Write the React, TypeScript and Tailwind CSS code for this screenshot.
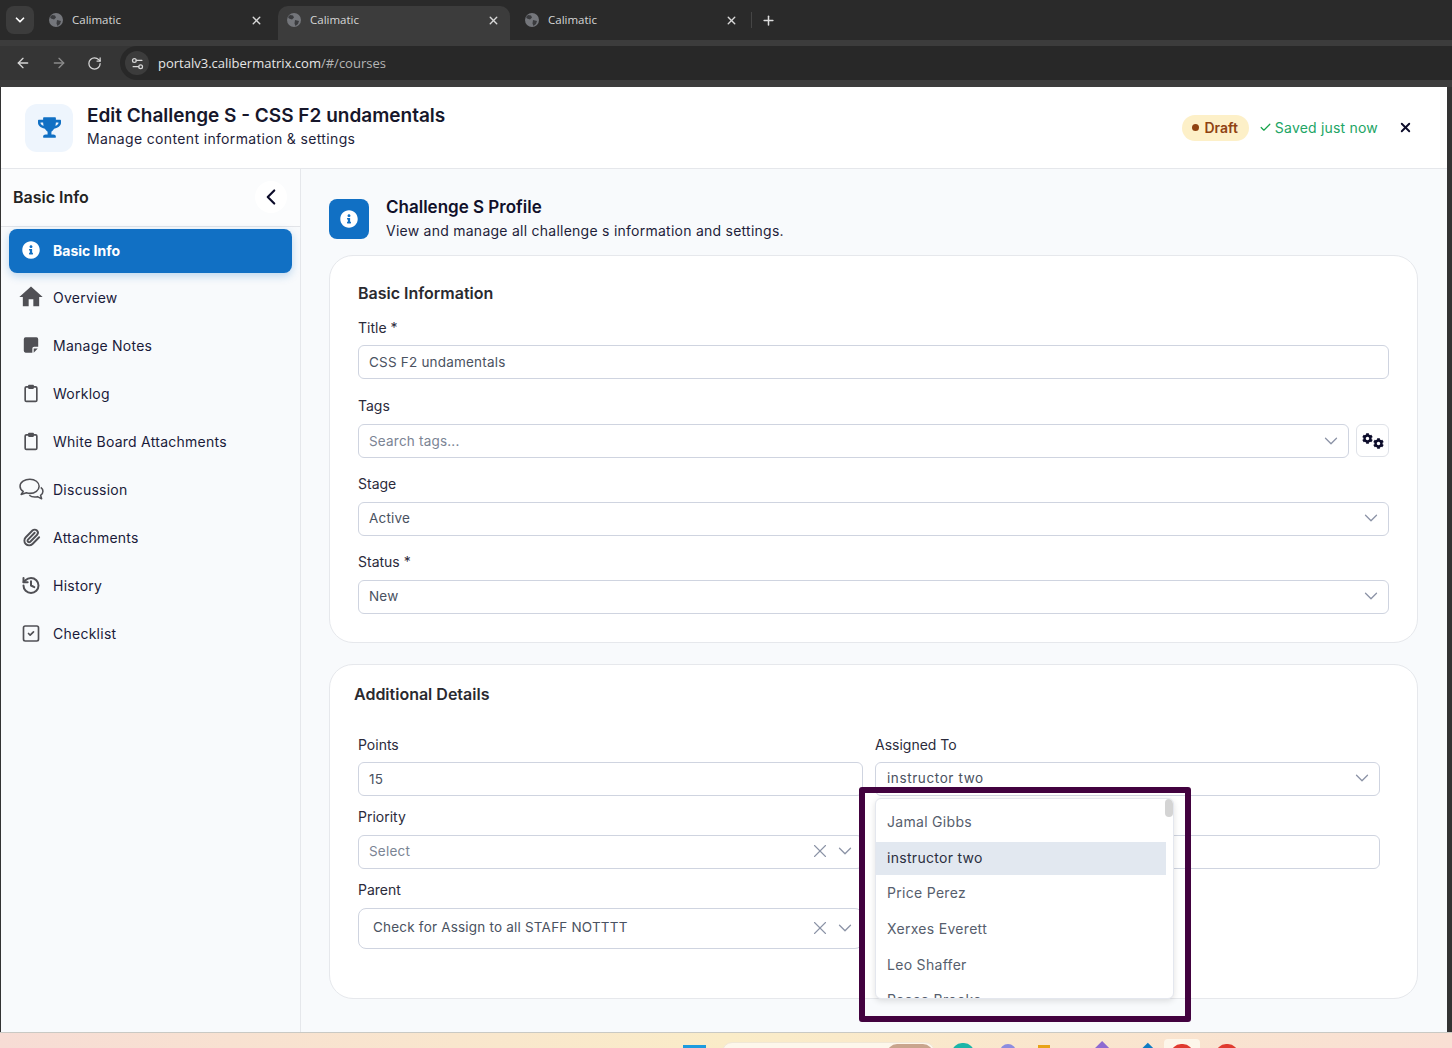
import {
  ArrowLeft,
  ArrowRight,
  Check,
  ChevronDown,
  ChevronLeft,
  History,
  Paperclip,
  Plus,
  RotateCw,
  Settings2,
  SquareCheck,
  X,
} from "lucide-react";
import { FaCog, FaInfoCircle, FaTrophy } from "react-icons/fa";
import { MdHome } from "react-icons/md";
import type { ReactNode } from "react";

function Globe() {
  return (
    <svg width="14" height="14" viewBox="0 0 14 14" className="shrink-0">
      <circle cx="7" cy="7" r="7" fill="#74767b" />
      <path d="M3 2l3 .5 1 2-2 2-3-1-1-1.500zM8 7l4 1-1 3-2.500 2-1-2.500z" fill="#3a3b3e" />
    </svg>
  );
}

function Tab({ active, className }: { active?: boolean; className: string }) {
  return (
    <div
      className={`flex items-center h-[34px] mt-[6px] pb-[6px] rounded-t-[10px] ${className} ${
        active ? "bg-[#3c3c3c]" : ""
      }`}
    >
      <Globe />
      <span className="ml-[9px] text-[11.5px] text-[#d6d6d6] flex-1">Calimatic</span>
      <X size={13} strokeWidth={2.6} className="text-[#d8d8d8]" />
    </div>
  );
}

function Browser() {
  return (
    <div className="shrink-0 font-['Open_Sans',sans-serif]">
      <div className="h-10 bg-[#2a2a2a] flex items-start pl-[6px]">
        <div className="mt-[6px] w-7 h-7 rounded-lg bg-[#3c3c3c] flex items-center justify-center">
          <ChevronDown size={14} strokeWidth={3} className="text-white" />
        </div>
        <div className="flex ml-[4px]">
          <Tab className="w-[240px] pl-[11px] pr-[15px]" />
          <Tab active className="w-[232px] pl-[9px] pr-[10px]" />
          <Tab className="w-[236px] pl-[15px] pr-[8px]" />
        </div>
        <div className="mt-[12px] ml-[5px] w-px h-[16px] bg-[#454545]" />
        <Plus size={15} strokeWidth={2.4} className="text-[#dddddd] mt-[12.500px] ml-[9px]" />
      </div>
      <div className="h-[40px] bg-[#3c3c3c] flex items-end">
        <div className="flex items-center h-[34px] self-end pl-[15px] gap-[20px] text-[#d6d6d6] bg-[#353535]">
          <ArrowLeft size={16} strokeWidth={2} />
          <ArrowRight size={16} strokeWidth={2} className="text-[#8b8b8b]" />
          <RotateCw size={15} strokeWidth={2} />
        </div>
        <div className="pl-[18px] flex-1 h-[34px] bg-[#353535]">
          <div className="h-[34px] bg-[#282828] rounded-l-[17px] flex items-center pl-[5px]">
            <div className="w-[24px] h-[24px] rounded-full bg-[#3c3c3c] flex items-center justify-center">
              <Settings2 size={15} className="text-[#d6d6d6]" />
            </div>
            <span className="ml-[9px] pt-px text-[13px] text-[#e6e6e6]">
              portalv3.calibermatrix.com<span className="text-[#b5b5b5]">/#/courses</span>
            </span>
          </div>
        </div>
      </div>
      <div className="h-[7px] bg-[#3c3c3c]" />
    </div>
  );
}

function NoteIcon() {
  return (
    <svg width="18" height="18" viewBox="0 0 20 20" fill="currentColor">
      <path d="M2 3.500a2 2 0 012-2h12a2 2 0 012 2v8.500h-4.500a2 2 0 00-2 2v4.500H4a2 2 0 01-2-2z" />
      <path d="M13 14h4.500l-4.500 4.500z" />
    </svg>
  );
}

function ClipboardIcon() {
  return (
    <svg width="23" height="23" viewBox="0 0 24 24" fill="none">
      <rect x="5" y="4" width="14" height="17.500" rx="1.500" stroke="currentColor" strokeWidth="2" />
      <rect x="8.500" y="1.500" width="7" height="5" rx="1" fill="currentColor" />
    </svg>
  );
}

function ChatIcon() {
  return (
    <svg width="27" height="24" viewBox="0 0 24 22" fill="none" stroke="currentColor" strokeWidth="1.400" strokeLinejoin="round" className="shrink-0">
      <path d="M10.500 2C5.800 2 1.500 4.800 1.500 8.500c0 2 1.100 3.600 2.900 4.800L2.500 16l4.800-1.500c1 .300 2.100.500 3.200.500 4.700 0 8.500-2.900 8.500-6.500S15.200 2 10.500 2z" />
      <path d="M20.500 9.500c1.300 1 2 2.200 2 3.600 0 1.500-.800 2.800-2.200 3.700l1 3.200-3.800-2c-.800.200-1.600.300-2.500.300-2 0-3.800-.600-5-1.600" />
    </svg>
  );
}

function NavItem({ icon, label, active }: { icon: ReactNode; label: string; active?: boolean }) {
  if (active) {
    return (
      <div className="mx-[8px] mt-[2px] mb-[1px] h-[44px] pb-[2px] rounded-lg bg-[#1170c4] shadow-[0_3px_8px_rgba(17,112,196,0.25)] flex items-center pl-[12px]">
        <span className="w-5 flex justify-center">{icon}</span>
        <span className="ml-[12px] text-[14px] font-bold text-white">{label}</span>
      </div>
    );
  }
  return (
    <div className="h-[48px] pb-[2px] flex items-center pl-[20px]">
      <span className="w-5 flex justify-center text-[#505055]">{icon}</span>
      <span className="ml-[12px] text-[14px] tracking-[0.25px] text-[#1a1a3a]">{label}</span>
    </div>
  );
}

function Sidebar() {
  return (
    <aside className="w-[300px] shrink-0 border-r border-[#e5e7eb] bg-[#f8fafc]">
      <div className="h-[58px] pb-[2px] flex items-center justify-between pl-[12px] pr-[13px] border-b border-[#e2e4e8] bg-[#fbfcfd]">
        <span className="text-[16px] font-semibold text-[#232323]">Basic Info</span>
        <span className="w-8 h-8 rounded-full bg-white flex items-center justify-center">
          <ChevronLeft size={26} strokeWidth={2} className="text-[#0c0c2a]" />
        </span>
      </div>
      <NavItem active label="Basic Info" icon={<FaInfoCircle size={18} className="text-white" />} />
      <NavItem label="Overview" icon={<MdHome size={28} className="shrink-0" />} />
      <NavItem label="Manage Notes" icon={<NoteIcon />} />
      <NavItem label="Worklog" icon={<ClipboardIcon />} />
      <NavItem label="White Board Attachments" icon={<ClipboardIcon />} />
      <NavItem label="Discussion" icon={<ChatIcon />} />
      <NavItem label="Attachments" icon={<Paperclip size={19} strokeWidth={2.4} />} />
      <NavItem label="History" icon={<History size={21} strokeWidth={2.4} />} />
      <NavItem label="Checklist" icon={<SquareCheck size={21} strokeWidth={2} />} />
    </aside>
  );
}

function Label({ children }: { children: ReactNode }) {
  return <div className="text-[14px] leading-[18px] text-[#2b2b3b]">{children}</div>;
}

function Field({
  value,
  muted,
  chevron,
  clear,
  className = "",
}: {
  value: string;
  muted?: boolean;
  chevron?: boolean;
  clear?: boolean;
  className?: string;
}) {
  return (
    <div
      className={`flex items-center h-[34px] rounded-md border border-[#cfd4e0] bg-white pl-[10px] pr-[6px] ${className}`}
    >
      <span className={`flex-1 text-[13.5px] tracking-[0.2px] ${muted ? "text-[#7b8494]" : "text-[#4a5261]"}`}>{value}</span>
      {clear && <X size={22} strokeWidth={1.2} className="text-[#8b93a6] mr-[3px]" />}
      {chevron && <ChevronDown size={22} strokeWidth={1.4} className="text-[#8b93a6]" />}
    </div>
  );
}

function Dropdown() {
  const names = ["Jamal Gibbs", "instructor two", "Price Perez", "Xerxes Everett", "Leo Shaffer", "Reese Brooks"];
  return (
    <div className="absolute left-[859px] top-[787px] w-[332px] h-[235px] border-[6px] border-[#42023f] rounded-[3px] pt-[5px] pl-[10px]">
      <div className="relative w-[299px] h-[201px] overflow-hidden bg-white rounded-md border border-[#e4e7ee] shadow-[0_2px_6px_rgba(0,0,0,0.12)] pt-[7px]">
        <div className="absolute right-0 top-0 w-[8px] h-[18px] bg-[#d4d4d4] rounded-full" />
        {names.map((n) => (
          <div
            key={n}
            className={`w-[290px] h-[33px] mb-[2.700px] pl-[11px] pb-[2px] flex items-center text-[14px] tracking-[0.3px] ${
              n === "instructor two" ? "bg-[#e2e8f0] text-[#2b2f3f]" : "text-[#565e6d]"
            }`}
          >
            {n}
          </div>
        ))}
      </div>
    </div>
  );
}

function Content() {
  return (
    <main className="flex-1 bg-[#f8fafc] pl-[28px] pr-[29px] pt-[30px]">
      <div className="flex items-center h-10">
        <div className="w-10 h-10 rounded-lg bg-[#1170c4] flex items-center justify-center">
          <FaInfoCircle size={18} className="text-white" />
        </div>
        <div className="ml-[17px]">
          <div className="text-[17px] leading-[22px] font-semibold text-[#10102a]">Challenge S Profile</div>
          <div className="text-[14px] leading-[22px] mt-[2px] tracking-[0.25px] text-[#1e1e3a]">
            View and manage all challenge s information and settings.
          </div>
        </div>
      </div>

      <section className="mt-[16px] h-[388px] rounded-[24px] border border-[#e6e8ec] bg-white pl-[28px] pr-[28px] pt-[27px]">
        <div className="text-[16px] leading-[20px] font-semibold text-[#2a2a2f]">Basic Information</div>
        <div className="mt-[16px]">
          <Label>Title *</Label>
          <Field className="mt-[8px]" value="CSS F2 undamentals" />
        </div>
        <div className="mt-[18px]">
          <Label>Tags</Label>
          <div className="mt-[9px] flex gap-[7px]">
            <Field className="flex-1" muted chevron value="Search tags..." />
            <div className="w-[33px] h-[33px] rounded-md border border-[#dfe2e8] flex items-center justify-center text-[#0c0c2a]">
              <FaCog size={11} className="-translate-y-[2px]" />
              <FaCog size={11} className="translate-y-[3px]" />
            </div>
          </div>
        </div>
        <div className="mt-[17px]">
          <Label>Stage</Label>
          <Field className="mt-[9px] !pb-[2px]" chevron value="Active" />
        </div>
        <div className="mt-[17px]">
          <Label>Status *</Label>
          <Field className="mt-[9px] !pb-[2px]" chevron value="New" />
        </div>
      </section>

      <section className="mt-[21px] h-[335px] rounded-[24px] border border-[#e6e8ec] bg-white pl-[24px] pt-[19px]">
        <div className="text-[16px] leading-[20px] font-semibold text-[#2a2a2f]">Additional Details</div>
        <div className="mt-[32px] ml-[4px] flex gap-[12px]">
          <div className="w-[505px]">
            <Label>Points</Label>
            <Field className="mt-[8px]" value="15" />
            <div className="mt-[12px]">
              <Label>Priority</Label>
              <Field className="mt-[9px] !pb-[2px]" muted clear chevron value="Select" />
            </div>
            <div className="mt-[12px]">
              <Label>Parent</Label>
              <Field className="mt-[9px] !h-[41px] !pl-[14px] !pb-[2px] !rounded-lg" clear chevron value="Check for Assign to all STAFF NOTTTT" />
            </div>
          </div>
          <div className="w-[505px]">
            <Label>Assigned To</Label>
            <Field className="mt-[8px] !pb-[2px] !pl-[11px] [&>span]:tracking-[0.6px]" chevron value="instructor two" />
            <div className="mt-[39px]">
              <Field value="" />
            </div>
          </div>
        </div>
      </section>
    </main>
  );
}

function Taskbar() {
  return (
    <div className="h-[16px] shrink-0 border-t border-[#c9c9c4] bg-gradient-to-r from-[#f7dcd5] via-[#faecc8] to-[#f9dfd4] overflow-hidden flex items-start pl-[683px]">
      <div className="mt-[12px] w-[23px] h-[10px] shrink-0 bg-[#1d9bdf]" />
      <div className="ml-[16px] mt-[9px] w-[213px] h-[20px] shrink-0 rounded-full bg-[#fdf7ec] border border-[#f0e7d6] flex justify-end">
        <div className="mt-px mr-px w-[46px] h-[20px] rounded-full bg-[#c9a58d]" />
      </div>
      <div className="ml-[17px] mt-[10px] w-[22px] h-[20px] shrink-0 rounded-full bg-[#1cb5a8]" />
      <div className="ml-[26px] mt-[11px] w-[16px] h-[20px] shrink-0 rounded-full bg-[#8c8ce0]" />
      <div className="ml-[22px] mt-[12px] w-[12px] h-[20px] shrink-0 bg-[#e8a317]" />
      <div className="ml-[43px] mt-[10px] w-[14px] h-[20px] shrink-0 bg-[#8d6ad1] rotate-45" />
      <div className="ml-[32px] mt-[11px] w-[12px] h-[20px] shrink-0 bg-[#0f7cc4] rotate-45" />
      <div className="ml-[13px] mt-[6px] w-[36px] h-[20px] shrink-0 rounded bg-[#fdf6ea] flex justify-center">
        <div className="mt-[5px] w-[22px] h-[20px] rounded-full bg-[#e03a2f]" />
      </div>
      <div className="ml-[16px] mt-[11px] w-[22px] h-[20px] shrink-0 rounded-full bg-[#e03a2f]" />
    </div>
  );
}

export default function App() {
  return (
    <div className="relative w-[1452px] h-[1048px] overflow-hidden flex flex-col bg-[#333333] font-['Inter','Noto_Sans',sans-serif]">
      <Browser />
      <div className="flex-1 flex flex-col min-h-0 ml-[1px] mr-[5px] bg-white">
        <header className="h-[82px] shrink-0 flex items-center border-b border-[#e5e7eb] bg-white pl-[24px] pr-[34px]">
          <div className="w-12 h-12 rounded-xl bg-[#eef5fd] flex items-center justify-center">
            <FaTrophy size={23} className="text-[#1170c4]" />
          </div>
          <div className="ml-[14px] flex-1 mb-[4px]">
            <div className="text-[19px] leading-[26px] font-semibold text-[#17172b]">Edit Challenge S - CSS F2 undamentals</div>
            <div className="text-[14px] leading-[20px] tracking-[0.35px] text-[#1e1e3a]">Manage content information &amp; settings</div>
          </div>
          <div className="h-[26px] pl-[10px] pr-[11px] rounded-full bg-[#fdf0c8] flex items-center text-[14px] font-semibold text-[#8f4211]">
            <span className="w-[7px] h-[7px] rounded-full bg-[#8f4211] mr-[5px]" />
            Draft
          </div>
          <Check size={13} strokeWidth={2.2} className="ml-[10px] text-[#16a34a]" />
          <span className="ml-[3px] text-[14px] tracking-[0.2px] text-[#22a565]">Saved just now</span>
          <X size={15} strokeWidth={3} className="ml-[20px] text-[#0c0c2a]" />
        </header>
        <div className="flex-1 flex min-h-0">
          <Sidebar />
          <Content />
        </div>
      </div>
      <Taskbar />
      <Dropdown />
    </div>
  );
}
